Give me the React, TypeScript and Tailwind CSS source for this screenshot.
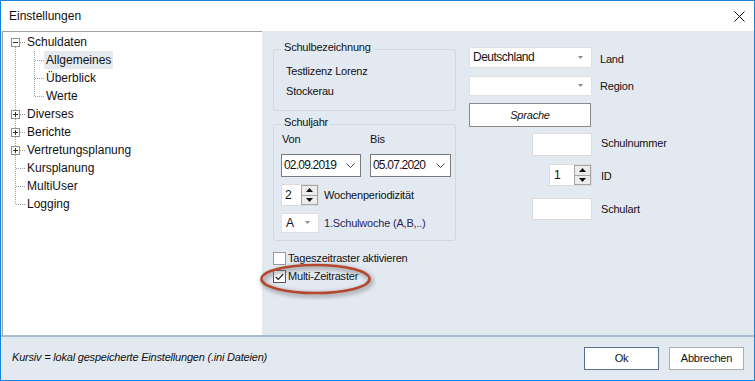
import React from "react";

const treeRows: { label: string; level: number; box?: "minus" | "plus"; selected?: boolean }[] = [
  { label: "Schuldaten", level: 0, box: "minus" },
  { label: "Allgemeines", level: 1, selected: true },
  { label: "Überblick", level: 1 },
  { label: "Werte", level: 1 },
  { label: "Diverses", level: 0, box: "plus" },
  { label: "Berichte", level: 0, box: "plus" },
  { label: "Vertretungsplanung", level: 0, box: "plus" },
  { label: "Kursplanung", level: 0 },
  { label: "MultiUser", level: 0 },
  { label: "Logging", level: 0 },
];

function TreeLines() {
  const centers = treeRows.map((_, i) => 10 + 18 * i);
  return (
    <svg className="absolute left-0 top-0 pointer-events-none" width="259" height="302" shapeRendering="crispEdges">
      <g stroke="#a0a0a0" strokeDasharray="1 1" strokeWidth="1">
        <line x1="12.5" y1="15" x2="12.5" y2={centers[9] + 1} />
        <line x1="31.5" y1="19" x2="31.5" y2={centers[3] + 1} />
        {treeRows.map((r, i) =>
          r.level === 0 ? (
            <line key={i} x1={r.box ? 17 : 13} y1={centers[i] + 0.5} x2="23" y2={centers[i] + 0.5} />
          ) : (
            <line key={i} x1="32" y1={centers[i] + 0.5} x2="41" y2={centers[i] + 0.5} />
          )
        )}
      </g>
      {treeRows.map((r, i) =>
        r.box ? (
          <g key={"b" + i}>
            <rect x="8.5" y={centers[i] - 3.5} width="8" height="8" fill="#fff" stroke="#919191" />
            <line x1="10" y1={centers[i] + 0.5} x2="15" y2={centers[i] + 0.5} stroke="#333" />
            {r.box === "plus" && <line x1="12.5" y1={centers[i] - 2} x2="12.5" y2={centers[i] + 3} stroke="#333" />}
          </g>
        ) : null
      )}
    </svg>
  );
}

function SmallArrow() {
  return (
    <svg width="6" height="4" viewBox="0 0 6 4">
      <path d="M0 0 L5 0 L2.5 3 Z" fill="#8a8a8a" />
    </svg>
  );
}

function Chevron() {
  return (
    <svg width="9" height="6" viewBox="0 0 9 6">
      <path d="M0.5 0.5 L4.5 4.5 L8.5 0.5" fill="none" stroke="#444" strokeWidth="1" />
    </svg>
  );
}

function SpinButtons() {
  return (
    <div className="flex flex-col w-[17px] h-full">
      <div className="flex-1 border border-[#a6a6a6] bg-[#ececec] flex items-center justify-center">
        <svg width="7" height="4" viewBox="0 0 7 4">
          <path d="M0 4 L7 4 L3.5 0 Z" fill="#111" />
        </svg>
      </div>
      <div className="flex-1 border border-t-0 border-[#a6a6a6] bg-[#ececec] flex items-center justify-center">
        <svg width="7" height="4" viewBox="0 0 7 4">
          <path d="M0 0 L7 0 L3.5 4 Z" fill="#111" />
        </svg>
      </div>
    </div>
  );
}

export default function App() {
  return (
    <div className="w-[755px] h-[381px] border border-[#1883d7] bg-[#e3e9f1] flex flex-col font-['Liberation_Sans',Arial,sans-serif] text-[#111] overflow-hidden">
      {/* Title bar */}
      <div className="h-[30px] bg-white flex items-center justify-between pl-[8px] pr-[9px] shrink-0">
        <span className="text-[12px] leading-[14px]">Einstellungen</span>
        <svg width="11" height="11" viewBox="0 0 11 11">
          <path d="M0.5 0.5 L10.5 10.5 M10.5 0.5 L0.5 10.5" stroke="#111" strokeWidth="1" />
        </svg>
      </div>

      {/* Body */}
      <div className="h-[304px] flex shrink-0">
        {/* Tree */}
        <div className="ml-[1px] w-[260px] bg-white border-l border-t border-[#a0a0a0] relative pt-[1px]">
          <TreeLines />
          {treeRows.map((r) => (
            <div key={r.label} className="h-[18px] flex items-center text-[12px] leading-[14px]">
              {r.level === 0 ? (
                <span className="pl-[24px]">{r.label}</span>
              ) : (
                <span
                  className={
                    r.selected
                      ? "ml-[41px] px-[2px] h-[18px] flex items-center bg-[#e5e9f0]"
                      : "ml-[41px] px-[2px] h-[18px] flex items-center"
                  }
                >
                  {r.label}
                </span>
              )}
            </div>
          ))}
        </div>

        {/* Right settings area */}
        <div className="flex-1 flex pl-[11px] pt-[16px] text-[11px] leading-[13px] tracking-[-0.2px]">
          {/* Column 1 */}
          <div className="w-[183px] flex flex-col">
            <div className="mt-[2px] h-[62px] border border-[#d3d8df] rounded-[3px] relative pt-[15px] pl-[12px]">
              <span className="absolute -top-[9px] left-[7px] px-[3px] bg-[#e3e9f1]">Schulbezeichnung</span>
              <div>Testlizenz Lorenz</div>
              <div className="mt-[7px]">Stockerau</div>
            </div>

            <div className="mt-[13px] h-[117px] border border-[#d3d8df] rounded-[3px] relative pt-[8px] pl-[7px]">
              <span className="absolute -top-[9px] left-[7px] px-[3px] bg-[#e3e9f1]">Schuljahr</span>
              <div className="flex">
                <span className="w-[89px] pl-[1px]">Von</span>
                <span>Bis</span>
              </div>
              <div className="flex gap-[9px] mt-[8px]">
                <div className="w-[80px] h-[23px] bg-white border border-[#7a7a7a] flex items-center justify-between pl-[2px] pr-[5px] text-[12px] tracking-[-0.8px]">
                  <span>02.09.2019</span>
                  <Chevron />
                </div>
                <div className="w-[81px] h-[23px] bg-white border border-[#7a7a7a] flex items-center justify-between pl-[2px] pr-[5px] text-[12px] tracking-[-0.8px]">
                  <span>05.07.2020</span>
                  <Chevron />
                </div>
              </div>
              <div className="flex items-center mt-[7px]">
                <div className="w-[38px] h-[22px] bg-white border border-[#dcdcdc] flex">
                  <span className="flex-1 pl-[3px] flex items-center text-[12px]">2</span>
                  <SpinButtons />
                </div>
                <span className="ml-[5px]">Wochenperiodizität</span>
              </div>
              <div className="flex items-center mt-[7px]">
                <div className="w-[38px] h-[20px] bg-white border border-[#e0e0e0] flex items-center justify-between pl-[4px] pr-[7px]">
                  <span className="text-[12px]">A</span>
                  <SmallArrow />
                </div>
                <span className="ml-[5px] text-[#2b1f5c]">1.Schulwoche (A,B,..)</span>
              </div>
            </div>

            <div className="mt-[11px] flex flex-col gap-[5px] relative">
              <div className="h-[13px] flex items-center">
                <div className="w-[13px] h-[13px] border border-[#9a9a9a] bg-white" />
                <span className="ml-[2px]">Tageszeitraster aktivieren</span>
              </div>
              <div className="h-[13px] flex items-center">
                <div className="w-[13px] h-[13px] border border-[#555] bg-white flex items-center justify-center">
                  <svg width="9" height="8" viewBox="0 0 9 8">
                    <path d="M0.8 4 L3.3 6.5 L8.2 1" fill="none" stroke="#222" strokeWidth="1.2" />
                  </svg>
                </div>
                <span className="ml-[2px]">Multi-Zeitraster</span>
              </div>
              <svg className="absolute -left-[16px] top-[4px] pointer-events-none" width="124" height="44" viewBox="0 0 124 44">
                <defs>
                  <filter id="sh" x="-20%" y="-50%" width="140%" height="200%">
                    <feGaussianBlur stdDeviation="2" />
                  </filter>
                </defs>
                <ellipse cx="60" cy="25" rx="54" ry="14" fill="none" stroke="#7a7a7a" strokeWidth="5" opacity="0.55" filter="url(#sh)" />
                <ellipse cx="58.5" cy="23" rx="54" ry="14" fill="none" stroke="#b5472f" strokeWidth="2.6" />
              </svg>
            </div>
          </div>

          {/* Column 2 */}
          <div className="ml-[13px] flex flex-col">
            <div className="flex items-center">
              <div className="w-[123px] h-[21px] bg-white border border-[#e0e0e0] flex items-center justify-between pl-[3px] pr-[7px]">
                <span className="text-[12px] tracking-[-0.5px]">Deutschland</span>
                <SmallArrow />
              </div>
              <span className="ml-[8px] mt-[3px]">Land</span>
            </div>
            <div className="flex items-center mt-[8px]">
              <div className="w-[123px] h-[20px] bg-white border border-[#e0e0e0] flex items-center justify-end pr-[7px]">
                <SmallArrow />
              </div>
              <span className="ml-[8px]">Region</span>
            </div>
            <div className="mt-[7px] w-[122px] h-[24px] bg-white border border-[#8a8a8a] flex items-center justify-center italic">
              Sprache
            </div>
            <div className="flex items-center mt-[6px]">
              <div className="ml-[63px] w-[60px] h-[23px] bg-white border border-[#dcdcdc]" />
              <span className="ml-[9px] -mt-[3px]">Schulnummer</span>
            </div>
            <div className="flex items-center mt-[8px]">
              <div className="ml-[80px] w-[43px] h-[22px] bg-white border border-[#dcdcdc] flex">
                <span className="flex-1 pl-[4px] flex items-center text-[12px]">1</span>
                <SpinButtons />
              </div>
              <span className="ml-[9px] mt-[3px]">ID</span>
            </div>
            <div className="flex items-center mt-[12px]">
              <div className="ml-[63px] w-[60px] h-[22px] bg-white border border-[#dcdcdc]" />
              <span className="ml-[9px]">Schulart</span>
            </div>
          </div>
        </div>
      </div>

      {/* Separator */}
      <div className="h-[2px] bg-[#abbcd1] shrink-0" />

      {/* Footer */}
      <div className="flex-1 flex items-center justify-between pl-[11px] pr-[10px] text-[11px] leading-[13px]">
        <span className="italic tracking-[-0.2px] -mt-[3px]">Kursiv = lokal gespeicherte Einstellungen (.ini Dateien)</span>
        <div className="flex gap-[10px]">
          <div className="w-[75px] h-[23px] bg-white border border-[#5a7090] flex items-center justify-center tracking-[-0.2px]">Ok</div>
          <div className="w-[75px] h-[23px] bg-white border border-[#adadad] flex items-center justify-center tracking-[-0.2px]">Abbrechen</div>
        </div>
      </div>
    </div>
  );
}
